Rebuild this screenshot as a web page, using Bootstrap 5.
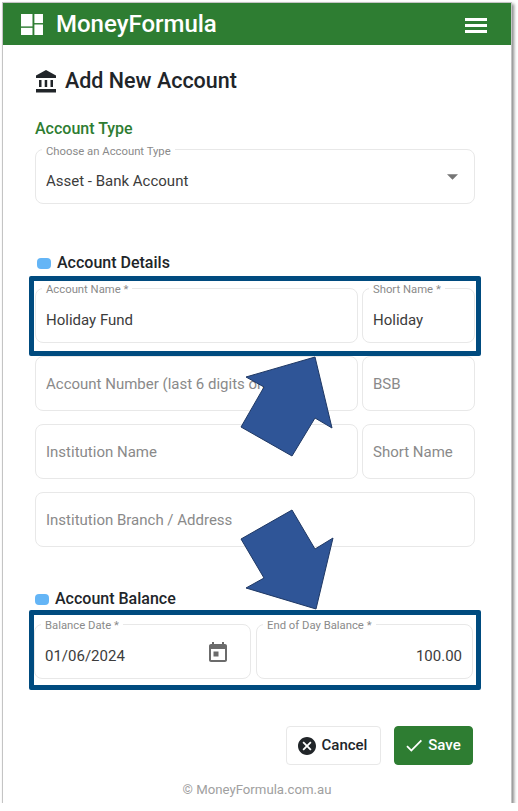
<!DOCTYPE html>
<html lang="en">
<head>
  <meta charset="UTF-8" />
  <title>MoneyFormula - Add New Account</title>
  <meta name="viewport" content="width=device-width, initial-scale=1" />
  <link href="https://cdn.jsdelivr.net/npm/bootstrap@5.3.0/dist/css/bootstrap.min.css" rel="stylesheet" />
  <style>
    body {
      font-family: Roboto, "Liberation Sans", sans-serif;
      background: #fff;
      color: #212529;
    }

    .app-frame {
      position: relative;
      width: 508px;
      height: 800px;
      margin: 3px 0 0 3px;
      background: #fff;
      box-shadow: 0 0 0 1px #c4c4c4, 2px 2px 3px 1px #8c8c8c;
    }

    .app-bar {
      background: #2e7d32;
      height: 42px;
      padding: 0 24px 0 18px;
    }

    .brand-name {
      color: #fff;
      font-size: 24px;
      font-weight: 500;
      line-height: 1;
      margin-left: 5px;
    }

    .menu-btn {
      width: 22px;
      margin-top: 2px;
    }

    .menu-btn span {
      display: block;
      height: 3px;
      margin: 3px 0;
      background: #fff;
    }

    .form-area {
      padding: 23px 36px 0 32px;
    }

    .page-title {
      font-size: 21.5px;
      font-weight: 500;
      line-height: 26px;
      margin: 0 0 25px;
    }

    .type-title {
      color: #2e7d32;
      font-size: 16px;
      font-weight: 500;
      line-height: 20px;
      margin: 0 0 10px;
    }

    .sect-title {
      font-size: 16px;
      font-weight: 500;
      line-height: 20px;
      gap: 6px;
    }

    .type-box {
      margin-bottom: 49px;
    }

    .type-box .float-label {
      top: -4px;
    }

    .detail-head {
      margin: 0 0 15px;
    }

    .balance-head {
      margin: 42px 0 15px;
    }

    .sect-dot {
      display: inline-block;
      width: 14px;
      height: 11px;
      border-radius: 4px;
      background: #64b5f6;
    }

    .detail-head .sect-dot {
      margin-left: 2px;
    }

    .field-box {
      position: relative;
    }

    .field-box .form-control,
    .field-box .form-select {
      height: 55px;
      padding: 9px 10px 0;
      border: 1px solid #e8e8e8;
      border-radius: 8px;
      font-size: 15px;
      color: #3c3c3c;
    }

    .field-box .form-control::placeholder {
      color: #8a8a8a;
      opacity: 1;
    }

    .field-box .plain-input {
      padding-top: 0;
    }

    .field-box .form-select {
      background-image: url("data:image/svg+xml,%3csvg xmlns='http://www.w3.org/2000/svg' viewBox='0 0 12 6'%3e%3cpath fill='%23757575' d='M0 0h12L6 6z'/%3e%3c/svg%3e");
      background-size: 11px 6px;
      background-position: right 16px center;
    }

    .float-label {
      position: absolute;
      top: -5px;
      left: 7px;
      padding: 0 4px;
      background: #fff;
      color: #8a8a8a;
      font-size: 11.3px;
      line-height: 13px;
    }

    .cal-icon {
      position: absolute;
      top: 17px;
      right: 21px;
      fill: #6b6b6b;
    }

    .col-wide {
      flex: 1 1 0;
    }

    .col-short {
      flex: 0 0 113px;
      width: 113px;
    }

    .field-row {
      position: relative;
      gap: 4px;
      margin-bottom: 13px;
    }

    .balance-row {
      gap: 5px;
      margin: 0 2px 0 -1px;
    }

    .callout {
      position: absolute;
      top: -12px;
      bottom: -13px;
      left: -6px;
      right: -6px;
      border: 5px solid #004b7f;
      border-radius: 2px;
      pointer-events: none;
    }

    .balance-row .callout {
      top: -14px;
      bottom: -11px;
      left: -5px;
      right: -8px;
    }

    .arrow-layer {
      position: absolute;
      top: -3px;
      left: -3px;
      pointer-events: none;
    }

    .action-row {
      margin: 47px 2px 0 0;
      gap: 13px;
    }

    .btn-cancel,
    .btn-save {
      height: 39px;
      padding: 0;
      border-radius: 4px;
      font-size: 15px;
      font-weight: 500;
      gap: 6px;
    }

    .btn-cancel svg,
    .btn-save svg {
      flex-shrink: 0;
    }

    .btn-cancel {
      width: 95px;
      padding-right: 2px;
      border: 1px solid #e8e8e8;
      background: #fff;
      color: #212529;
    }

    .btn-save {
      width: 79px;
      border: 1px solid #2e7d32;
      background: #2e7d32;
      color: #fff;
    }

    .foot-note {
      position: absolute;
      bottom: 5px;
      left: 0;
      right: 0;
      text-align: center;
      color: #a0a0a0;
      font-size: 13.2px;
      line-height: 16px;
    }
  </style>
</head>
<body class="m-0">

<div class="app-frame">

  <!-- top bar -->
  <nav class="app-bar d-flex align-items-center justify-content-between">
    <div class="d-flex align-items-center gap-2">
      <svg width="22" height="21" viewBox="0 0 23 22" fill="#fff">
        <rect x="0" y="0" width="12" height="13" />
        <rect x="0" y="14.5" width="12" height="7.5" />
        <rect x="14" y="0" width="9" height="9.5" />
        <rect x="14" y="11" width="9" height="11" />
      </svg>
      <span class="brand-name">MoneyFormula</span>
    </div>
    <div class="menu-btn"><span></span><span></span><span></span></div>
  </nav>

  <form class="form-area">
    <h1 class="page-title d-flex align-items-center gap-2">
      <svg width="22" height="23" viewBox="0 0 22 23" fill="#212529">
        <path d="M11 0 1 5.500V8h20V5.500z" />
        <rect x="4" y="10" width="2.500" height="7" />
        <rect x="9.700" y="10" width="2.500" height="7" />
        <rect x="15.500" y="10" width="2.500" height="7" />
        <rect x="1" y="19" width="20" height="3.500" />
      </svg>
      Add New Account
    </h1>

    <h2 class="type-title">Account Type</h2>
    <div class="field-box type-box">
      <label class="float-label" for="accType">Choose an Account Type</label>
      <select class="form-select" id="accType">
        <option>Asset - Bank Account</option>
      </select>
    </div>

    <h2 class="sect-title d-flex align-items-center detail-head">
      <span class="sect-dot"></span> Account Details
    </h2>
    <div class="field-row d-flex">
      <div class="field-box col-wide">
        <label class="float-label">Account Name *</label>
        <input class="form-control" value="Holiday Fund" />
      </div>
      <div class="field-box col-short">
        <label class="float-label">Short Name *</label>
        <input class="form-control" value="Holiday" />
      </div>
      <div class="callout"></div>
    </div>
    <div class="field-row d-flex">
      <div class="field-box col-wide">
        <input class="form-control plain-input" placeholder="Account Number (last 6 digits only)" />
      </div>
      <div class="field-box col-short">
        <input class="form-control plain-input" placeholder="BSB" />
      </div>
    </div>
    <div class="field-row d-flex">
      <div class="field-box col-wide">
        <input class="form-control plain-input" placeholder="Institution Name" />
      </div>
      <div class="field-box col-short">
        <input class="form-control plain-input" placeholder="Short Name" />
      </div>
    </div>
    <div class="field-box">
      <input class="form-control plain-input" placeholder="Institution Branch / Address" />
    </div>

    <h2 class="sect-title d-flex align-items-center balance-head">
      <span class="sect-dot"></span> Account Balance
    </h2>
    <div class="field-row balance-row d-flex">
      <div class="field-box flex-fill w-50">
        <label class="float-label">Balance Date *</label>
        <input class="form-control" value="01/06/2024" />
        <svg class="cal-icon" width="24" height="24" viewBox="0 0 24 24">
          <path d="M7.500 10.500h5v5h-5zM16 1v2H8V1H6v2H5c-1.110 0-1.990.9-1.990 2L3 19c0 1.100.89 2 2 2h14c1.100 0 2-.9 2-2V5c0-1.100-.9-2-2-2h-1V1h-2zm3 18H5V8h14v11z" />
        </svg>
      </div>
      <div class="field-box flex-fill w-50">
        <label class="float-label">End of Day Balance *</label>
        <input class="form-control text-end" value="100.00" />
      </div>
      <div class="callout"></div>
    </div>

    <div class="d-flex justify-content-end action-row">
      <button type="button" class="btn btn-cancel d-flex align-items-center justify-content-center">
        <svg width="18" height="18" viewBox="2 2 20 20" fill="#212529">
          <path d="M12 2C6.470 2 2 6.470 2 12s4.470 10 10 10 10-4.470 10-10S17.530 2 12 2zm5 13.590L15.590 17 12 13.410 8.410 17 7 15.590 10.590 12 7 8.410 8.410 7 12 10.590 15.590 7 17 8.410 13.410 12 17 15.590z" />
        </svg>
        Cancel
      </button>
      <button type="button" class="btn btn-save d-flex align-items-center justify-content-center">
        <svg width="16" height="13" viewBox="3 5 18 14" fill="#fff">
          <path d="M9 16.170 4.830 12l-1.420 1.410L9 19 21 7l-1.410-1.410z" />
        </svg>
        Save
      </button>
    </div>
  </form>

  <div class="foot-note">© MoneyFormula.com.au</div>

  <!-- annotation arrows, page coordinates -->
  <svg class="arrow-layer" width="518" height="811" viewBox="0 0 518 811">
    <polygon points="315,357 332,428 315,418 292,456 241,427 264,387 246,377" fill="#2f5597" stroke="#1f3864" stroke-width="1" />
    <polygon points="292,510 315,549 333,538 316,609 246,588 264,578 241,539" fill="#2f5597" stroke="#1f3864" stroke-width="1" />
  </svg>
</div>

<script src="https://cdn.jsdelivr.net/npm/bootstrap@5.3.0/dist/js/bootstrap.bundle.min.js"></script>
</body>
</html>
